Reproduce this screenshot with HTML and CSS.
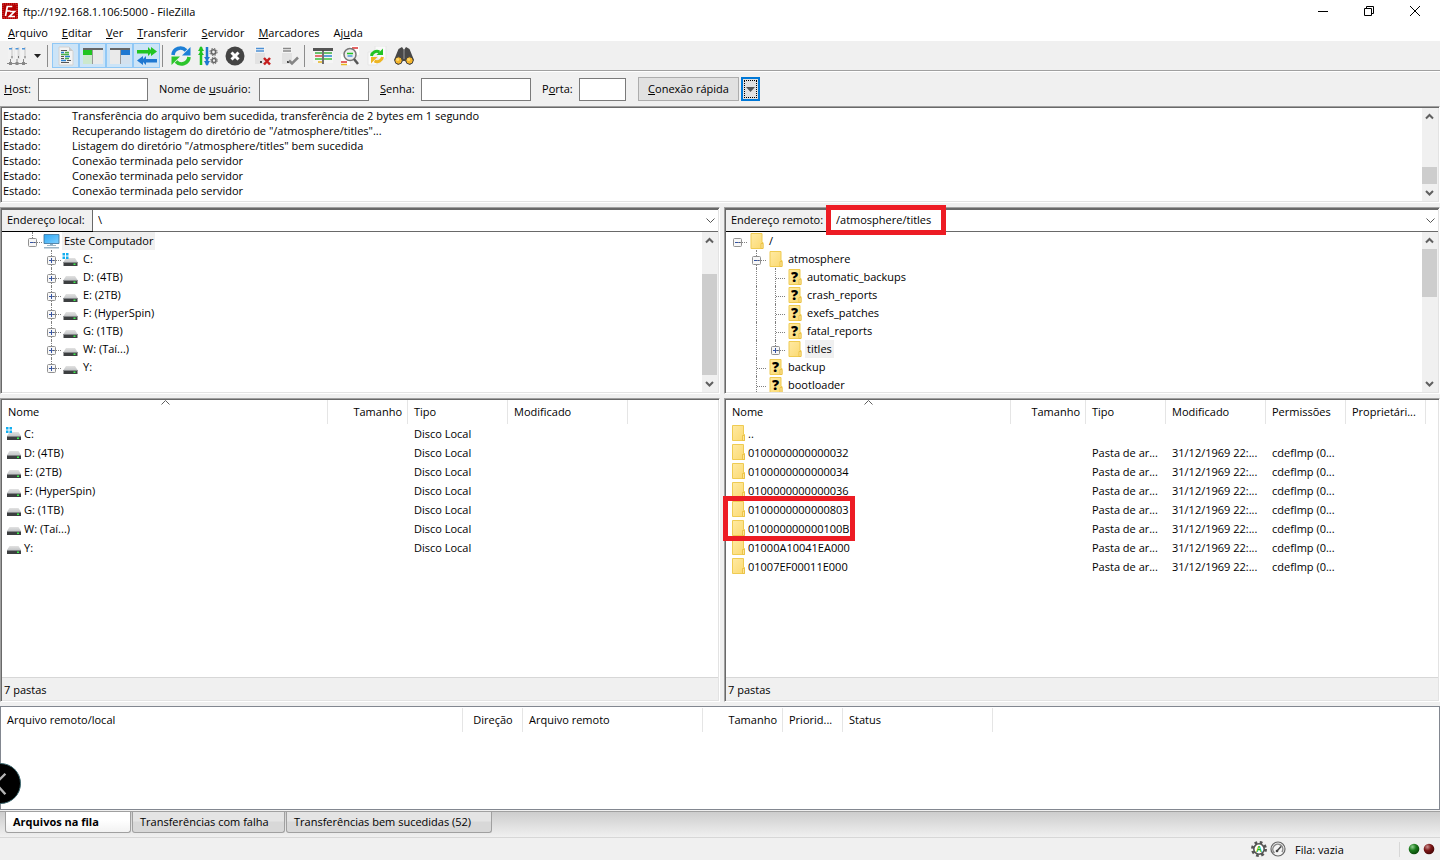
FILE: index.html
```html
<!DOCTYPE html>
<html lang="pt-BR">
<head>
  <meta charset="UTF-8" />
  <meta name="viewport" content="width=device-width, initial-scale=1.0"/>
  <title>ftp://192.168.1.106:5000 - FileZilla</title>
  <link rel="stylesheet" href="styles.css">
</head>
<body>

  <!-- Shared icons -->
  <svg class="sprite" aria-hidden="true">
    <defs>
      <linearGradient id="g-folder" x1="0" y1="0" x2="1" y2="1">
        <stop offset="0" stop-color="#ffeaa3"/><stop offset="1" stop-color="#fbd970"/>
      </linearGradient>
      <linearGradient id="g-screen" x1="0" y1="0" x2="1" y2="1">
        <stop offset="0" stop-color="#2fa8f5"/><stop offset="1" stop-color="#7fd0ff"/>
      </linearGradient>
      <linearGradient id="g-drive" x1="0" y1="0" x2="0" y2="1">
        <stop offset="0" stop-color="#e2e2e2"/><stop offset="1" stop-color="#c4c6c8"/>
      </linearGradient>
      <radialGradient id="g-green" cx=".35" cy=".3" r=".7">
        <stop offset="0" stop-color="#8fd08f"/><stop offset=".5" stop-color="#1c7a1c"/><stop offset="1" stop-color="#0a4a0a"/>
      </radialGradient>
      <radialGradient id="g-red" cx=".35" cy=".3" r=".7">
        <stop offset="0" stop-color="#c98f8f"/><stop offset=".5" stop-color="#7c1616"/><stop offset="1" stop-color="#4a0808"/>
      </radialGradient>
      <symbol id="drive" viewBox="0 0 16 16">
        <path d="M3.500 7h9l2.500 4H1z" fill="url(#g-drive)"/>
        <path d="M1 11h14v4H1z" fill="#3d3f41"/>
        <path d="M1 11h14v1H1z" fill="#85878a"/>
        <path d="M11 12.500h2v1.500h-2z" fill="#3df04c"/>
      </symbol>
      <symbol id="drive-win" viewBox="0 0 16 16">
        <use href="#drive" width="16" height="16"/>
        <path d="M0 2h2.500v2.500H0zM3.500 2H6v2.500H3.500zM0 5.500h2.500V8H0zM3.500 5.500H6V8H3.500z" fill="#12aef0"/>
      </symbol>
      <symbol id="folder" viewBox="0 0 16 16">
        <path d="M2.500.5h11v9h1v6h-12z" fill="url(#g-folder)" stroke="#efcb52"/>
        <path d="M12.500 15.500v-5h2v5z" fill="#fce59a" stroke="#e8bd3a" stroke-width=".8"/>
      </symbol>
      <symbol id="folder-q" viewBox="0 0 16 16">
        <use href="#folder" width="16" height="16"/>
        <text x="8" y="13" text-anchor="middle" class="glyph-q">?</text>
      </symbol>
      <symbol id="pc" viewBox="0 0 17 16">
        <path d="M1 1.500h15v9H1z" fill="url(#g-screen)" stroke="#3b6f96" stroke-width=".8"/>
        <path d="M7 11h3v1.500H7z" fill="#8fb2c8"/>
        <path d="M4 12h9v1H4zM1 14h15v1.500H1z" fill="#9bb5c6"/>
      </symbol>
      <symbol id="plus" viewBox="0 0 9 9">
        <rect x=".5" y=".5" width="8" height="8" rx="1" fill="#f7f7f7" stroke="#919191"/>
        <path d="M2 4.500h5M4.500 2v5" stroke="#3453a4"/>
      </symbol>
      <symbol id="minus" viewBox="0 0 9 9">
        <rect x=".5" y=".5" width="8" height="8" rx="1" fill="#f7f7f7" stroke="#919191"/>
        <path d="M2 4.500h5" stroke="#3453a4"/>
      </symbol>
      <symbol id="up" viewBox="0 0 15 15">
        <path d="M4 9.500 7.500 6 11 9.500" fill="none" stroke="#606060" stroke-width="2"/>
      </symbol>
      <symbol id="down" viewBox="0 0 15 15">
        <path d="M4 6 7.500 9.500 11 6" fill="none" stroke="#606060" stroke-width="2"/>
      </symbol>
      <symbol id="sort" viewBox="0 0 9 5">
        <path d="M.5 4.500 4.500.5l4 4" fill="none" stroke="#5f5f5f"/>
      </symbol>
      <symbol id="server" viewBox="0 0 20 20">
        <path d="M3 0h10v18H3z" fill="#e2e2e2"/>
        <path d="M3 0h10v7H3z" fill="#f4f4f4"/>
        <path d="M8 15h2v2H8z" fill="#444"/>
      </symbol>
      <symbol id="sync" viewBox="0 0 20 20">
        <path d="M2 9A7.500 7.500 0 0 1 15 4.500" fill="none" stroke="#1d7fd6" stroke-width="3.600"/>
        <path d="M19.500 1v8.500H11z" fill="#1d7fd6"/>
        <path d="M18 11A7.500 7.500 0 0 1 5 15.500" fill="none" stroke="#2cc52c" stroke-width="3.600"/>
        <path d="M.5 19v-8.500H9z" fill="#2cc52c"/>
      </symbol>
    </defs>
  </svg>

  <header class="titlebar">
    <svg class="app-logo" viewBox="0 0 16 16">
      <rect width="16" height="16" rx="1" fill="#b30000"/>
      <path d="M1 1h14v14H1z" fill="none" stroke="#cf4a4a" stroke-dasharray="1 1"/>
      <path d="M3.500 13 5.300 3.500h5M4.500 8h4M8 8.500h4.500l-5 5H13" fill="none" stroke="#fff" stroke-width="1.700"/>
    </svg>
    <h1>ftp://192.168.1.106:5000 - FileZilla</h1>
    <div class="window-buttons">
      <button aria-label="Minimizar"><svg viewBox="0 0 12 12"><path d="M1 6.500h10" stroke="#000"/></svg></button>
      <button aria-label="Restaurar"><svg viewBox="0 0 12 12"><path d="M1.500 3.500h7v7h-7zM3.500 3.500v-2h7v7h-2" fill="none" stroke="#000"/></svg></button>
      <button aria-label="Fechar"><svg viewBox="0 0 12 12"><path d="M1 1l10 10M11 1 1 11" stroke="#000"/></svg></button>
    </div>
  </header>

  <nav class="menubar">
    <button><u>A</u>rquivo</button>
    <button><u>E</u>ditar</button>
    <button><u>V</u>er</button>
    <button><u>T</u>ransferir</button>
    <button><u>S</u>ervidor</button>
    <button><u>M</u>arcadores</button>
    <button>Aj<u>u</u>da</button>
  </nav>

  <div class="toolbar">
    <button class="tool" aria-label="Gerenciador de sites">
      <svg viewBox="0 0 20 20">
        <path d="M1 1h5v12H1zM7.500 1h5v12h-5zM14 1h5v12h-5z" fill="#dadada"/>
        <path d="M1 1h3v12H1zM7.500 1h3v12h-3zM14 1h3v12h-3z" fill="#f2f2f2"/>
        <path d="M2 2h3v1.500H2zM8.500 2h3v1.500h-3zM15 2h3v1.500h-3z" fill="#4d94d8"/>
        <path d="M4.500 10h1v2h-1zM11 10h1v2h-1zM17.500 10h1v2h-1z" fill="#777"/>
        <path d="M3.500 13v4M10 13v4M16.500 13v4M0 17.500h20" stroke="#888" fill="none"/>
        <path d="M2 16h3v3H2zM8.500 16h3v3h-3zM15 16h3v3h-3z" fill="#888"/>
      </svg>
    </button>
    <button class="tool-arrow" aria-label="Abrir lista de sites"><svg viewBox="0 0 7 4"><path d="M0 0h7L3.500 4z" fill="#222"/></svg></button>
    <span class="separator"></span>
    <button class="tool active" aria-label="Registro de mensagens">
      <svg viewBox="0 0 20 20">
        <path d="M3 1h10l4 4v14H3z" fill="#f3f3f3" stroke="#d2d2d2"/>
        <path d="M13 1v4h4z" fill="#c9c9c9"/>
        <path d="M5 4.500h6M5 12.500h3M11 14.500h4" stroke="#555"/>
        <path d="M5 6.500h3M9 10.500h5M5 14.500h5" stroke="#2a80d0" stroke-width="1.500"/>
        <path d="M9 6.500h4M5 8.500h8M9 12.500h4" stroke="#4bb14b" stroke-width="1.500"/>
        <path d="M5 10.500h3M5 16.500h8" stroke="#555"/>
      </svg>
    </button>
    <button class="tool active" aria-label="Árvore local">
      <svg viewBox="0 0 20 20">
        <path d="M0 2h20v16H0z" fill="#eaeaea"/><path d="M0 2h20v2H0z" fill="#666"/>
        <path d="M0 4h9v5H0z" fill="#20c520"/><path d="M0 9h9v9H0z" fill="#cce8cc"/>
        <path d="M9 4h1v14H9z" fill="#999"/>
      </svg>
    </button>
    <button class="tool active" aria-label="Árvore remota">
      <svg viewBox="0 0 20 20">
        <path d="M0 2h20v16H0z" fill="#eaeaea"/><path d="M0 2h20v2H0z" fill="#666"/>
        <path d="M11 4h9v5h-9z" fill="#1f78d1"/><path d="M11 9h9v9h-9z" fill="#d3e1ee"/>
        <path d="M10 4h1v14h-1z" fill="#999"/>
      </svg>
    </button>
    <button class="tool active" aria-label="Fila de transferência">
      <svg viewBox="0 0 20 20">
        <path d="M0 4h11V1l3 3V1l6 4.500-6 4.500V7l-3 3V7.500H0z" fill="#22c422"/>
        <path d="M20 13H9v-3l-3 3v-3l-6 4.500L6 19v-3l3 3v-2.500h11z" fill="#1f78d1"/>
      </svg>
    </button>
    <span class="separator"></span>
    <button class="tool" aria-label="Atualizar"><svg><use href="#sync"/></svg></button>
    <button class="tool" aria-label="Processar fila">
      <svg viewBox="0 0 20 20">
        <path d="M3 1v18" stroke="#22c422" stroke-width="2.500"/><path d="M0 5l3-5 3 5zM0 9l3-4 3 4z" fill="#22c422"/>
        <path d="M9 1v18" stroke="#1f78d1" stroke-width="2.500"/><path d="M6 15l3 5 3-5zM6 11l3 4 3-4z" fill="#1f78d1"/>
        <circle cx="15.500" cy="6" r="2.200" fill="none" stroke="#666" stroke-width="1.600"/>
        <circle cx="15.500" cy="6" r="3.600" fill="none" stroke="#666" stroke-dasharray="1.500 1.330"/>
        <circle cx="16" cy="14.500" r="2" fill="none" stroke="#666" stroke-width="1.600"/>
        <circle cx="16" cy="14.500" r="3.300" fill="none" stroke="#666" stroke-dasharray="1.300 1.290"/>
      </svg>
    </button>
    <button class="tool" aria-label="Cancelar">
      <svg viewBox="0 0 20 20"><circle cx="10" cy="10" r="9.500" fill="#444"/><path d="M6.500 6.500l7 7M13.500 6.500l-7 7" stroke="#fff" stroke-width="3"/></svg>
    </button>
    <button class="tool" aria-label="Desconectar">
      <svg viewBox="0 0 20 20"><use href="#server"/><path d="M4 2.500h8M4 5h8" stroke="#4c90d4" stroke-width="1.300"/><path d="M12 12l6 6.500M18 12l-6 6.500" stroke="#c51e1e" stroke-width="2.500"/></svg>
    </button>
    <button class="tool" aria-label="Reconectar">
      <svg viewBox="0 0 20 20"><use href="#server"/><path d="M4 2.500h8M4 5h8" stroke="#888" stroke-width="1.300"/><path d="M10 14.500l3 3 6-6" fill="none" stroke="#858585" stroke-width="2.500"/></svg>
    </button>
    <span class="separator"></span>
    <button class="tool" aria-label="Filtros">
      <svg viewBox="0 0 20 20">
        <path d="M0 2h20v3H0z" fill="#555"/><path d="M0 5h20v12H0z" fill="#f5f5f5"/>
        <path d="M2 7h7M11 7h8" stroke="#3fae3f" stroke-width="1.500"/><path d="M2 10h7" stroke="#d44" stroke-width="1.500"/>
        <path d="M11 10h8" stroke="#2a80d0" stroke-width="1.500"/><path d="M2 13h7M11 13h8" stroke="#3cbf3c" stroke-width="1.500"/><path d="M5 16h4" stroke="#e4b51c" stroke-width="1.500"/>
        <path d="M10 4v14" stroke="#444" stroke-width="1.500"/>
      </svg>
    </button>
    <button class="tool" aria-label="Comparação de diretórios">
      <svg viewBox="0 0 20 20">
        <path d="M1 8h9v11H1zM10 0h9v9h-9z" fill="#fff"/>
        <path d="M12 2h6M1 16h6" stroke="#d33" stroke-width="1.500"/><path d="M1 18.500h6" stroke="#e9b820" stroke-width="1.500"/>
        <circle cx="10" cy="8.500" r="6" fill="#ececec" stroke="#777" stroke-width="1.500"/>
        <path d="M7 7.500h6" stroke="#22c422" stroke-width="1.500"/><path d="M7.500 10h5" stroke="#4e9ae0" stroke-width="1.500"/>
        <path d="M14 13l4 5" stroke="#555" stroke-width="2.500"/>
      </svg>
    </button>
    <button class="tool" aria-label="Navegação sincronizada">
      <svg viewBox="0 0 20 20">
        <path d="M8 0h11v13H8zM1 6h9v13H1z" fill="#fafafa" stroke="#e6e6e6"/>
        <path d="M4.500 10a5.500 5.500 0 0 1 8-4" fill="none" stroke="#22c422" stroke-width="3"/><path d="M16 2.500V9H9.500z" fill="#22c422"/>
        <path d="M15.500 11a5.500 5.500 0 0 1-8 4" fill="none" stroke="#edb523" stroke-width="3"/><path d="M4 17.500V11h6.500z" fill="#edb523"/>
      </svg>
    </button>
    <button class="tool" aria-label="Procurar arquivos">
      <svg viewBox="0 0 20 20">
        <path d="M4.500 3 8 1l2 3 2-3 3.500 2L20 14l-4 5-5-4H9l-5 4-4-5z" fill="#484848"/>
        <path d="M9.500 4h1v9h-1z" fill="#9a9a9a"/>
        <circle cx="4.500" cy="14.500" r="3.700" fill="#f5b52b" stroke="#444"/><circle cx="15.500" cy="14.500" r="3.700" fill="#f5b52b" stroke="#444"/>
        <circle cx="3.700" cy="13.500" r="1.500" fill="#ffd96c"/><circle cx="14.700" cy="13.500" r="1.500" fill="#ffd96c"/>
      </svg>
    </button>
  </div>

  <form class="quickconnect">
    <div class="field"><label for="host" class="w-host"><u>H</u>ost:</label><input type="text" id="host"></div>
    <div class="field"><label for="user" class="w-user">Nome de <u>u</u>suário:</label><input type="text" id="user"></div>
    <div class="field"><label for="pass" class="w-pass"><u>S</u>enha:</label><input type="password" id="pass"></div>
    <div class="field"><label for="port" class="w-port">P<u>o</u>rta:</label><input type="text" id="port" class="short"></div>
    <div class="connect">
      <button type="button" class="connect-btn"><u>C</u>onexão rápida</button>
      <button type="button" class="connect-drop" aria-label="Histórico"><svg viewBox="0 0 9 5"><path d="M0 0h9L4.500 5z" fill="#555"/></svg></button>
    </div>
  </form>

  <!-- Message log -->
  <section class="sunken log">
    <dl>
      <dt>Estado:</dt><dd>Transferência do arquivo bem sucedida, transferência de 2 bytes em 1 segundo</dd>
      <dt>Estado:</dt><dd>Recuperando listagem do diretório de "/atmosphere/titles"...</dd>
      <dt>Estado:</dt><dd>Listagem do diretório "/atmosphere/titles" bem sucedida</dd>
      <dt>Estado:</dt><dd>Conexão terminada pelo servidor</dd>
      <dt>Estado:</dt><dd>Conexão terminada pelo servidor</dd>
      <dt>Estado:</dt><dd>Conexão terminada pelo servidor</dd>
    </dl>
    <div class="scrollbar"><svg><use href="#up"/></svg><span class="track"></span><span class="thumb thumb-log"></span><svg><use href="#down"/></svg></div>
  </section>

  <main class="panes">
    <section class="pane pane-local">
      <div class="sunken tree-box">
        <div class="address">
          <label for="local-path" class="local-label">Endereço local:</label>
          <input type="text" id="local-path" value="\">
          <button aria-label="Abrir lista"><svg viewBox="0 0 9 6"><path d="M.5.5l4 4 4-4" fill="none" stroke="#555"/></svg></button>
        </div>
        <div class="tree-area">
          <ul class="tree tree-local">
            <li><i class="cell top"><svg><use href="#minus"/></svg></i><svg class="icon"><use href="#pc"/></svg><span class="selected">Este Computador</span></li>
            <li><i class="cell"></i><i class="cell line"><svg><use href="#plus"/></svg></i><svg class="icon"><use href="#drive-win"/></svg><span>C:</span></li>
            <li><i class="cell"></i><i class="cell line"><svg><use href="#plus"/></svg></i><svg class="icon"><use href="#drive"/></svg><span>D: (4TB)</span></li>
            <li><i class="cell"></i><i class="cell line"><svg><use href="#plus"/></svg></i><svg class="icon"><use href="#drive"/></svg><span>E: (2TB)</span></li>
            <li><i class="cell"></i><i class="cell line"><svg><use href="#plus"/></svg></i><svg class="icon"><use href="#drive"/></svg><span>F: (HyperSpin)</span></li>
            <li><i class="cell"></i><i class="cell line"><svg><use href="#plus"/></svg></i><svg class="icon"><use href="#drive"/></svg><span>G: (1TB)</span></li>
            <li><i class="cell"></i><i class="cell line"><svg><use href="#plus"/></svg></i><svg class="icon"><use href="#drive"/></svg><span>W: (Taí...)</span></li>
            <li><i class="cell"></i><i class="cell top"><svg><use href="#plus"/></svg></i><svg class="icon"><use href="#drive"/></svg><span>Y:</span></li>
          </ul>
          <div class="scrollbar"><svg><use href="#up"/></svg><span class="track"></span><span class="thumb thumb-local"></span><svg><use href="#down"/></svg></div>
        </div>
      </div>

      <div class="sunken list-box">
        <div class="list-area">
          <table class="files">
            <colgroup><col class="c-name-local"><col class="c80"><col class="c100"><col class="c120"><col></colgroup>
            <thead><tr><th>Nome<svg class="sort"><use href="#sort"/></svg></th><th class="right">Tamanho</th><th>Tipo</th><th>Modificado</th><th class="rest"></th></tr></thead>
            <tbody>
              <tr><td><div class="name drive"><svg><use href="#drive-win"/></svg>C:</div></td><td></td><td>Disco Local</td><td></td><td></td></tr>
              <tr><td><div class="name drive"><svg><use href="#drive"/></svg>D: (4TB)</div></td><td></td><td>Disco Local</td><td></td><td></td></tr>
              <tr><td><div class="name drive"><svg><use href="#drive"/></svg>E: (2TB)</div></td><td></td><td>Disco Local</td><td></td><td></td></tr>
              <tr><td><div class="name drive"><svg><use href="#drive"/></svg>F: (HyperSpin)</div></td><td></td><td>Disco Local</td><td></td><td></td></tr>
              <tr><td><div class="name drive"><svg><use href="#drive"/></svg>G: (1TB)</div></td><td></td><td>Disco Local</td><td></td><td></td></tr>
              <tr><td><div class="name drive"><svg><use href="#drive"/></svg>W: (Taí...)</div></td><td></td><td>Disco Local</td><td></td><td></td></tr>
              <tr><td><div class="name drive"><svg><use href="#drive"/></svg>Y:</div></td><td></td><td>Disco Local</td><td></td><td></td></tr>
            </tbody>
          </table>
        </div>
        <div class="summary">7 pastas</div>
      </div>
    </section>

    <section class="pane">
      <div class="sunken tree-box">
        <div class="address">
          <label for="remote-path" class="remote-label">Endereço remoto:</label>
          <input type="text" id="remote-path" value="/atmosphere/titles">
          <button aria-label="Abrir lista"><svg viewBox="0 0 9 6"><path d="M.5.5l4 4 4-4" fill="none" stroke="#555"/></svg></button>
          <span class="mark mark-path"></span>
        </div>
        <div class="tree-area">
          <ul class="tree tree-remote">
            <li><i class="cell"><svg><use href="#minus"/></svg></i><svg class="icon"><use href="#folder"/></svg><span>/</span></li>
            <li><i class="cell"></i><i class="cell line"><svg><use href="#minus"/></svg></i><svg class="icon"><use href="#folder"/></svg><span>atmosphere</span></li>
            <li><i class="cell"></i><i class="cell line leafless"></i><i class="cell line"></i><svg class="icon"><use href="#folder-q"/></svg><span>automatic_backups</span></li>
            <li><i class="cell"></i><i class="cell line leafless"></i><i class="cell line"></i><svg class="icon"><use href="#folder-q"/></svg><span>crash_reports</span></li>
            <li><i class="cell"></i><i class="cell line leafless"></i><i class="cell line"></i><svg class="icon"><use href="#folder-q"/></svg><span>exefs_patches</span></li>
            <li><i class="cell"></i><i class="cell line leafless"></i><i class="cell line"></i><svg class="icon"><use href="#folder-q"/></svg><span>fatal_reports</span></li>
            <li><i class="cell"></i><i class="cell line leafless"></i><i class="cell top"><svg><use href="#plus"/></svg></i><svg class="icon"><use href="#folder"/></svg><span class="selected">titles</span></li>
            <li><i class="cell"></i><i class="cell line"></i><svg class="icon"><use href="#folder-q"/></svg><span>backup</span></li>
            <li><i class="cell"></i><i class="cell line"></i><svg class="icon"><use href="#folder-q"/></svg><span>bootloader</span></li>
          </ul>
          <div class="scrollbar"><svg><use href="#up"/></svg><span class="thumb thumb-remote"></span><span class="track"></span><svg><use href="#down"/></svg></div>
        </div>
      </div>

      <div class="sunken list-box">
        <div class="list-area">
          <table class="files">
            <colgroup><col class="c-name-remote"><col class="c75"><col class="c80"><col class="c100"><col class="c80"><col class="c80"><col></colgroup>
            <thead><tr><th>Nome<svg class="sort"><use href="#sort"/></svg></th><th class="right">Tamanho</th><th>Tipo</th><th>Modificado</th><th>Permissões</th><th>Proprietári...</th><th class="rest"></th></tr></thead>
            <tbody>
              <tr><td><div class="name"><svg><use href="#folder"/></svg>..</div></td><td></td><td></td><td></td><td></td><td></td><td></td></tr>
              <tr><td><div class="name"><svg><use href="#folder"/></svg>0100000000000032</div></td><td></td><td>Pasta de ar...</td><td>31/12/1969 22:...</td><td>cdeflmp (0...</td><td></td><td></td></tr>
              <tr><td><div class="name"><svg><use href="#folder"/></svg>0100000000000034</div></td><td></td><td>Pasta de ar...</td><td>31/12/1969 22:...</td><td>cdeflmp (0...</td><td></td><td></td></tr>
              <tr><td><div class="name"><svg><use href="#folder"/></svg>0100000000000036</div></td><td></td><td>Pasta de ar...</td><td>31/12/1969 22:...</td><td>cdeflmp (0...</td><td></td><td></td></tr>
              <tr><td><div class="name"><svg><use href="#folder"/></svg>0100000000000803</div></td><td></td><td>Pasta de ar...</td><td>31/12/1969 22:...</td><td>cdeflmp (0...</td><td></td><td></td></tr>
              <tr><td><div class="name"><svg><use href="#folder"/></svg>010000000000100B</div></td><td></td><td>Pasta de ar...</td><td>31/12/1969 22:...</td><td>cdeflmp (0...</td><td></td><td></td></tr>
              <tr><td><div class="name"><svg><use href="#folder"/></svg>01000A10041EA000</div></td><td></td><td>Pasta de ar...</td><td>31/12/1969 22:...</td><td>cdeflmp (0...</td><td></td><td></td></tr>
              <tr><td><div class="name"><svg><use href="#folder"/></svg>01007EF00011E000</div></td><td></td><td>Pasta de ar...</td><td>31/12/1969 22:...</td><td>cdeflmp (0...</td><td></td><td></td></tr>
            </tbody>
          </table>
          <span class="mark mark-titles"></span>
        </div>
        <div class="summary">7 pastas</div>
      </div>
    </section>
  </main>

  <!-- Transfer queue -->
  <section class="queue">
    <table class="files">
      <colgroup><col class="c-queue-file"><col class="c60"><col class="c180"><col class="c80"><col class="c60"><col class="c150"><col></colgroup>
      <thead><tr><th>Arquivo remoto/local</th><th class="center">Direção</th><th>Arquivo remoto</th><th class="right">Tamanho</th><th>Priorid...</th><th>Status</th><th class="rest"></th></tr></thead>
    </table>
    <button class="side-handle" aria-label="Voltar"><svg viewBox="0 0 40 40"><path d="M25 10 15 20l10 11" fill="none" stroke="#b5b5b5" stroke-width="2.500"/></svg></button>
  </section>

  <div class="tabs">
    <button class="tab tab-queue current">Arquivos na fila</button>
    <button class="tab tab-failed">Transferências com falha</button>
    <button class="tab tab-done">Transferências bem sucedidas (52)</button>
  </div>

  <footer class="statusbar">
    <svg class="status-icon" viewBox="0 0 16 16">
      <circle cx="8" cy="8" r="6.500" fill="none" stroke="#555" stroke-width="3" stroke-dasharray="2.600 2.500"/>
      <circle cx="8" cy="8" r="5.200" fill="#fff" stroke="#555" stroke-width="1.600"/>
      <text x="8" y="11" text-anchor="middle" class="glyph-a">A</text>
    </svg>
    <svg class="status-icon" viewBox="0 0 16 16">
      <circle cx="8" cy="8" r="7" fill="#f4f4f4" stroke="#666" stroke-width="1.200"/>
      <path d="M4.500 12A5 5 0 1 1 12 11" fill="none" stroke="#888" stroke-width="1.500"/>
      <path d="M7 10l4-4.500" stroke="#444" stroke-width="1.500"/><circle cx="7" cy="10" r="1.300" fill="#444"/>
    </svg>
    <span class="queue-state">Fila: vazia</span>
    <span class="leds">
      <svg viewBox="0 0 12 12"><circle cx="6" cy="6" r="5.300" fill="url(#g-green)"/></svg>
      <svg viewBox="0 0 12 12"><circle cx="6" cy="6" r="5.300" fill="url(#g-red)"/></svg>
    </span>
  </footer>

</body>
</html>
```
FILE: styles.css
```css
* {
  box-sizing: border-box;
}

body {
  margin: 0;
  height: 100vh;
  display: flex;
  flex-direction: column;
  overflow: hidden;
  background: #f0f0f0;
  color: #000;
  font-family: "Open Sans", "Noto Sans", sans-serif;
  font-size: 11px;
  line-height: 15px;
}

button,
input {
  font: inherit;
  color: inherit;
  margin: 0;
  padding: 0;
  border: 0;
  background: none;
}

svg {
  display: block;
  flex: none;
}

.sprite {
  position: absolute;
  width: 0;
  height: 0;
}

.glyph-q {
  font: 800 14px "Open Sans", sans-serif;
}

.glyph-a {
  font: bold 8px "Open Sans", sans-serif;
  fill: #1fb81f;
}

/* title and menu */
.titlebar {
  display: flex;
  align-items: center;
  height: 24px;
  padding: 0 0 2px 2px;
  background: #fff;
}

.app-logo {
  width: 16px;
  height: 16px;
}

.titlebar h1 {
  flex: 1;
  margin: 0 0 0 5px;
  font-size: 11px;
  font-weight: normal;
}

.window-buttons {
  display: flex;
  padding-right: 2px;
}

.window-buttons button {
  display: flex;
  justify-content: center;
  width: 46px;
  padding-bottom: 1px;
}

.window-buttons svg {
  width: 12px;
  height: 12px;
}

.menubar {
  display: flex;
  gap: 14px;
  height: 17px;
  padding-left: 8px;
  background: #fff;
}

/* toolbar */
.toolbar {
  display: flex;
  align-items: center;
  height: 30px;
  padding-left: 3px;
  border-bottom: 1px solid #a0a0a0;
}

.tool {
  display: flex;
  align-items: center;
  justify-content: center;
  width: 27px;
  height: 25px;
}

.tool svg {
  width: 20px;
  height: 20px;
}

.tool.active {
  background: #cce4f7;
  border: 1px solid #90c8f6;
}

.tool-arrow {
  display: flex;
  justify-content: center;
  width: 15px;
}

.tool-arrow svg {
  width: 7px;
  height: 4px;
}

.separator {
  width: 1px;
  height: 22px;
  margin: 0 4px 0 2px;
  background: #8c8c8c;
}

/* quick connect */
.quickconnect {
  display: flex;
  align-items: center;
  gap: 11px;
  height: 35px;
  padding-left: 4px;
  border-top: 1px solid #fff;
}

.field {
  display: flex;
  align-items: center;
}

.field label {
  padding-bottom: 2px;
}

.field input {
  width: 110px;
  height: 23px;
  padding: 0 4px;
  border: 1px solid #7a7a7a;
  background: #fff;
}

.field .short {
  width: 47px;
}

.w-host { width: 34px; }
.w-user { width: 100px; }
.w-pass { width: 41px; }
.w-port { width: 37px; }

.connect {
  display: flex;
  gap: 2px;
  padding-left: 1px;
}

.connect-btn {
  width: 101px;
  height: 24px;
  padding-bottom: 1px;
  border: 1px solid #adadad;
  background: #e1e1e1;
}

.connect-drop {
  display: flex;
  align-items: center;
  justify-content: center;
  width: 19px;
  height: 24px;
  border: 2px solid #0078d7;
  background: #e1e1e1;
  outline: 1px dotted #000;
  outline-offset: -4px;
}

.connect-drop svg {
  width: 9px;
  height: 5px;
}

/* sunken frames */
.sunken {
  border: 1px solid;
  border-color: #a0a0a0 #fff #fff #a0a0a0;
  box-shadow: inset 1px 1px #696969, inset -1px -1px #e3e3e3;
  padding: 1px;
  background: #fff;
}

.scrollbar {
  display: flex;
  flex-direction: column;
  width: 16px;
  background: #f0f0f0;
}

.scrollbar svg {
  width: 15px;
  height: 17px;
}

.track {
  flex: 1;
}

.thumb {
  width: 15px;
  background: #cdcdcd;
}

.thumb-log { height: 17px; }
.thumb-local { height: 101px; }
.thumb-remote { height: 48px; }

.log {
  display: flex;
  height: 97px;
}

.log dl {
  flex: 1;
  display: grid;
  grid-template-columns: 69px 1fr;
  align-content: start;
  margin: 0;
  padding-left: 1px;
}

.log dd {
  margin: 0;
}

/* local and remote panes */
.panes {
  flex: 1;
  display: flex;
  gap: 4px;
  min-height: 0;
  padding-top: 4px;
}

.pane {
  flex: 1;
  display: flex;
  flex-direction: column;
  gap: 4px;
  min-width: 0;
}

.pane-local {
  flex: 0 0 50%;
}

.tree-box {
  height: 187px;
}

.address {
  position: relative;
  display: flex;
  height: 23px;
  border-top: 1px solid #696969;
  border-bottom: 1px solid #696969;
}

.address label {
  padding: 2px 0 0 5px;
  border-right: 1px solid #696969;
  background: #f0f0f0;
  box-shadow: 0 1px #000;
}

.local-label { width: 91px; }
.remote-label { width: 105px; }

.address input {
  flex: 1;
  min-width: 0;
  padding: 0 0 2px 5px;
}

.address button {
  width: 15px;
}

.address button svg {
  width: 9px;
  height: 6px;
  margin: 0 auto;
}

.tree-area {
  display: flex;
  height: 160px;
  overflow: hidden;
}

.tree {
  flex: 1;
  margin: 0;
  padding: 0;
  list-style: none;
}

.tree-local { padding-left: 21px; }
.tree-remote { padding-left: 2px; }

.tree li {
  display: flex;
  align-items: center;
  height: 18px;
}

/* one 19px cell per tree level */
.cell {
  position: relative;
  width: 19px;
  height: 18px;
  padding: 6px 5px 0;
}

.cell svg {
  position: relative;
  width: 9px;
  height: 9px;
}

.cell.line::before,
.cell.top::before {
  content: "";
  position: absolute;
  left: 9px;
  top: 0;
  height: 18px;
  border-left: 1px dotted #808080;
}

.cell.top::before {
  height: 10px;
}

/* dotted branch leading to the icon */
.cell:not(.leafless):has(+ .icon)::after {
  content: "";
  position: absolute;
  left: 10px;
  right: 0;
  top: 10px;
  border-top: 1px dotted #808080;
}

.tree .icon {
  width: 17px;
  height: 16px;
  margin: 0 2px 0 1px;
}

.tree li span {
  height: 18px;
  padding: 1px 2px 0;
}

.tree .selected {
  background: #f0f0f0;
}

/* file lists */
.list-box {
  flex: 1;
  display: flex;
  flex-direction: column;
  min-height: 0;
}

.list-area {
  position: relative;
  flex: 1;
}

.files {
  width: 100%;
  table-layout: fixed;
  border-collapse: separate;
  border-spacing: 0;
}

.files th {
  position: relative;
  height: 24px;
  padding: 0 5px 2px 6px;
  border-right: 1px solid #e5e5e5;
  font-weight: normal;
  text-align: left;
  white-space: nowrap;
}

.files th.rest {
  border-right: 0;
}

.files th.right { text-align: right; }
.files th.center { text-align: center; }

.files td {
  height: 19px;
  padding: 0 0 1px 6px;
  white-space: nowrap;
}

.sort {
  position: absolute;
  top: 0;
  left: calc(50% - 4px);
  width: 9px;
  height: 5px;
}

.name {
  display: flex;
  align-items: center;
  height: 18px;
  margin-left: -2px;
}

.name svg {
  width: 16px;
  height: 16px;
  margin-right: 2px;
}

.c-name-local { width: 326px; }
.c-name-remote { width: 285px; }
.c-queue-file { width: 462px; }
.c60 { width: 60px; }
.c75 { width: 75px; }
.c80 { width: 80px; }
.c100 { width: 100px; }
.c120 { width: 120px; }
.c150 { width: 150px; }
.c180 { width: 180px; }

.summary {
  height: 23px;
  padding: 4px 2px;
  border-top: 1px solid #d7d7d7;
  background: #f0f0f0;
}

/* red highlight frames */
.mark {
  position: absolute;
  border: 5px solid #ed1c24;
}

.mark-path {
  left: 100px;
  top: -5px;
  width: 120px;
  height: 30px;
}

.mark-titles {
  left: -3px;
  top: 96px;
  width: 132px;
  height: 45px;
}

/* queue, tabs and status bar */
.queue {
  position: relative;
  height: 104px;
  margin-top: 4px;
  padding-top: 1px;
  border: 1px solid #828790;
  background: #fff;
}

.side-handle {
  position: absolute;
  left: -21px;
  top: 56px;
  width: 41px;
  height: 41px;
  border: 1px solid #3d6870;
  border-radius: 50%;
  background: #000;
}

.tabs {
  display: flex;
  gap: 1px;
  height: 26px;
  margin-top: 1px;
  padding: 0 5px 4px;
  border-top: 1px solid #a0a0a0;
  background: linear-gradient(#cdcdcd, #f0f0f0);
}

.tab {
  padding: 0 7px 2px;
  border: 1px solid #a0a0a0;
  border-top: 0;
  border-radius: 0 0 3px 3px;
  background: linear-gradient(#e4e4e4 45%, #d8d8d8 50%);
  text-align: left;
  white-space: nowrap;
}

.tab.current {
  background: linear-gradient(#fff 40%, #f2f2f2);
  font-weight: bold;
}

.tab-queue { width: 126px; }
.tab-failed { width: 153px; }
.tab-done { width: 206px; }

.statusbar {
  display: flex;
  align-items: center;
  justify-content: flex-end;
  gap: 3px;
  height: 23px;
  border-top: 1px solid #d7d7d7;
}

.status-icon {
  width: 16px;
  height: 16px;
}

.queue-state {
  width: 105px;
  margin-left: 6px;
  border-right: 1px solid #d7d7d7;
}

.leds {
  display: flex;
  gap: 3px;
  padding: 0 5px;
}

.leds svg {
  width: 12px;
  height: 12px;
}
```
